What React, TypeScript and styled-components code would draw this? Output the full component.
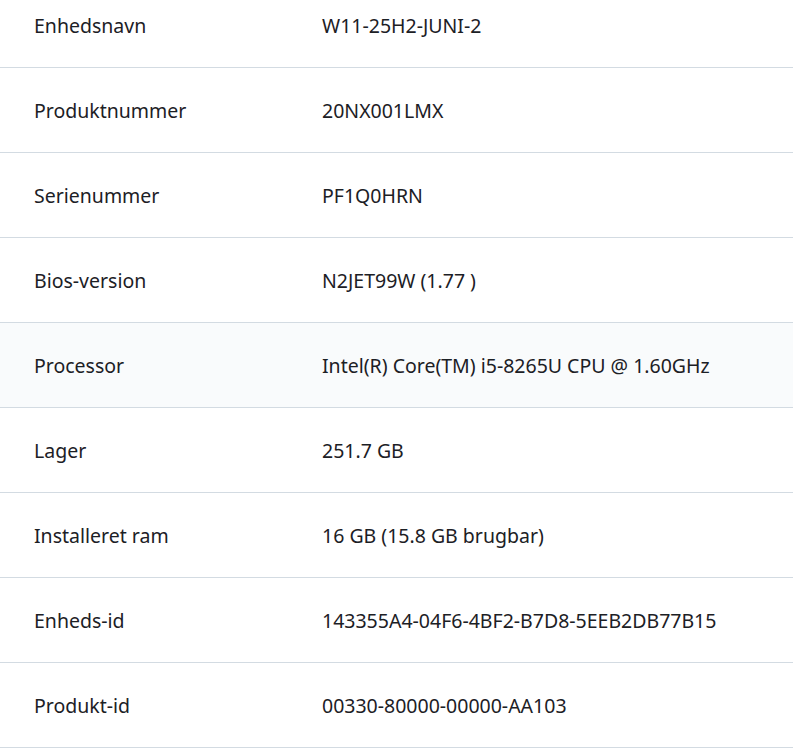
import React from 'react';
import styled, { createGlobalStyle } from 'styled-components';

const GlobalStyle = createGlobalStyle`
  html, body {
    margin: 0;
    padding: 0;
    background: #ffffff;
  }
  body {
    font-family: 'Noto Sans', 'Open Sans', 'Liberation Sans', sans-serif;
    color: #1c2025;
    overflow: hidden;
  }
`;

interface ISpecRow {
  label: string;
  value: string;
}

const specs: Array<ISpecRow> = [
  { label: 'Enhedsnavn', value: 'W11-25H2-JUNI-2' },
  { label: 'Produktnummer', value: '20NX001LMX' },
  { label: 'Serienummer', value: 'PF1Q0HRN' },
  { label: 'Bios-version', value: 'N2JET99W (1.77 )' },
  { label: 'Processor', value: 'Intel(R) Core(TM) i5-8265U CPU @ 1.60GHz' },
  { label: 'Lager', value: '251.7 GB' },
  { label: 'Installeret ram', value: '16 GB (15.8 GB brugbar)' },
  { label: 'Enheds-id', value: '143355A4-04F6-4BF2-B7D8-5EEB2DB77B15' },
  { label: 'Produkt-id', value: '00330-80000-00000-AA103' },
];

// the list is scrolled a little, so the first row is partly hidden
const SpecList = styled.div`
  display: flex;
  flex-direction: column;
  margin-top: -17px;
`;

const Row = styled.div<{ $highlighted?: boolean }>`
  display: grid;
  grid-template-columns: 288px 1fr;
  align-items: center;
  height: 84px;
  padding-left: 34px;
  padding-top: 2px;
  box-sizing: border-box;
  border-bottom: 1px solid #d3dbe2;
  background: ${(p) => (p.$highlighted ? '#f9fbfc' : '#ffffff')};
  font-size: 19.5px;
  line-height: 26px;
  height: 85px;
`;

const Label = styled.div`
  color: #1c2025;
`;

const Value = styled.div`
  color: #1c2025;
`;

const App: React.FC = (): JSX.Element => {
  return (
    <>
      <GlobalStyle />
      <SpecList>
        {specs.map((spec) => (
          <Row key={spec.label} $highlighted={spec.label === 'Processor'}>
            <Label>{spec.label}</Label>
            <Value>{spec.value}</Value>
          </Row>
        ))}
      </SpecList>
    </>
  );
};

export default App;
